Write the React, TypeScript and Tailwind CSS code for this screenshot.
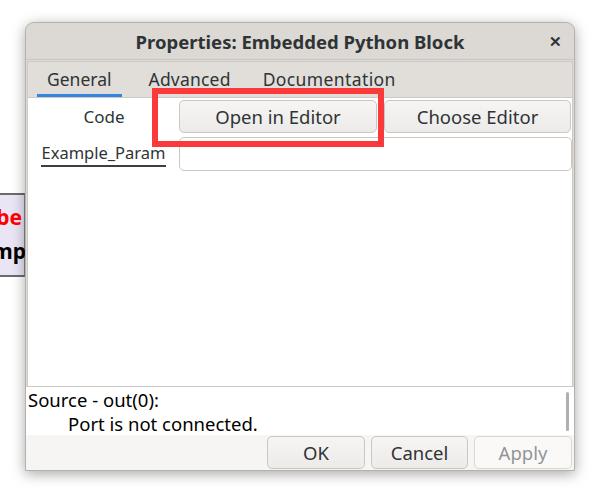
export default function App() {
  const font = { fontFamily: '"Noto Sans", "Open Sans", sans-serif' };
  return (
    <div className="relative w-[600px] h-[500px] bg-white overflow-hidden" style={font}>
      {/* block behind the dialog */}
      <div className="absolute left-[-60px] top-[193px] w-[85px] h-[84px] bg-[#e9e5f5] border-y-2 border-[#6b6b6b] border-r border-r-[#888]">
        <div className="absolute right-[2px] top-[12px] text-[21px] font-bold text-[#ff0000] leading-none">be</div>
        <div className="absolute right-[-2px] top-[46px] text-[21px] font-bold text-black leading-none">amp</div>
      </div>

      {/* dialog */}
      <div className="absolute left-[25px] top-[22px] w-[550px] h-[449px] flex flex-col bg-[#dedad6] border border-[#b5b1ad] rounded-t-[9px] shadow-[0_3px_14px_rgba(0,0,0,0.35)] text-[#2e3436]">
        {/* title bar */}
        <div className="relative h-[37px] shrink-0 flex items-center justify-center border-b border-[#c8c4c0] bg-[#dcd8d4] rounded-t-[9px]">
          <span className="text-[18.5px] font-bold pt-[1px]">Properties: Embedded Python Block</span>
          <span className="absolute right-[12px] top-[11px] text-[15px] font-bold leading-none">✕</span>
        </div>

        {/* notebook */}
        <div className="flex-1 flex flex-col mx-[1px] mt-[1px] border-x border-t border-[#cdc9c5] bg-[#e1ddd9]">
          <div className="h-[36px] shrink-0 flex items-end pl-[9px] text-[17.5px] border-b border-[#cdc9c5]">
            <div className="px-[10px] pt-[2px] h-full flex items-center border-b-[3px] border-[#3584e4]">General</div>
            <div className="ml-[16px] px-[11px] h-full flex items-center pt-[1px] pb-[2px] tracking-[0.2px]">Advanced</div>
            <div className="ml-[10px] px-[11px] h-full flex items-center pt-[1px] pb-[2px] tracking-[0.4px]">Documentation</div>
          </div>

          <div className="flex-1 bg-white flex flex-col text-[17px] pt-[1px]">
            <div className="flex items-center h-[35px]">
              <div className="w-[151px] text-center pl-[1px]">Code</div>
              <div className="flex-1 flex gap-[7px] pr-[1px] text-[18.5px]">
                <button className="w-[198px] h-[33px] rounded-[5px] border border-[#cdc7c2] bg-gradient-to-b from-[#f6f5f4] to-[#edebe9]">Open in Editor</button>
                <button className="flex-1 h-[33px] rounded-[5px] border border-[#cdc7c2] bg-gradient-to-b from-[#f6f5f4] to-[#edebe9]">Choose Editor</button>
              </div>
            </div>
            <div className="flex items-center h-[35px] mt-[2px]">
              <div className="w-[151px] flex justify-center">
                <span className="border-b-2 border-[#3b3f40] leading-[24px] text-[16.5px]">Example_Param</span>
              </div>
              <div className="flex-1 h-[34px] rounded-[5px] border border-[#cdc7c2] bg-white" />
            </div>
          </div>
        </div>

        {/* messages */}
        <div className="relative h-[49px] shrink-0 bg-white border-t border-[#cdc9c5] text-[18.5px] text-black leading-[24px] pl-[2px] pt-[1px]">
          <div>Source - out(0):</div>
          <div className="pl-[40px]">Port is not connected.</div>
          <div className="absolute right-[5px] top-[5px] w-[3px] h-[39px] rounded-full bg-[#b0b0b0]" />
        </div>

        {/* buttons */}
        <div className="h-[35px] shrink-0 bg-[#f6f5f4] flex justify-end items-start gap-[6px] pr-[2px] pt-[1px] text-[18.5px]">
          <button className="w-[98px] h-[33px] rounded-[5px] border border-[#cdc7c2] bg-gradient-to-b from-[#f6f5f4] to-[#edebe9]">OK</button>
          <button className="w-[97px] h-[33px] rounded-[5px] border border-[#cdc7c2] bg-gradient-to-b from-[#f6f5f4] to-[#edebe9]">Cancel</button>
          <button className="w-[98px] h-[33px] rounded-[5px] border border-[#dad6d2] bg-[#faf9f8] text-[#929595]">Apply</button>
        </div>
      </div>

      {/* annotation highlight */}
      <div className="absolute left-[152px] top-[88px] w-[232px] h-[59px] border-[6px] border-[#fa3a3a]" />
    </div>
  );
}
